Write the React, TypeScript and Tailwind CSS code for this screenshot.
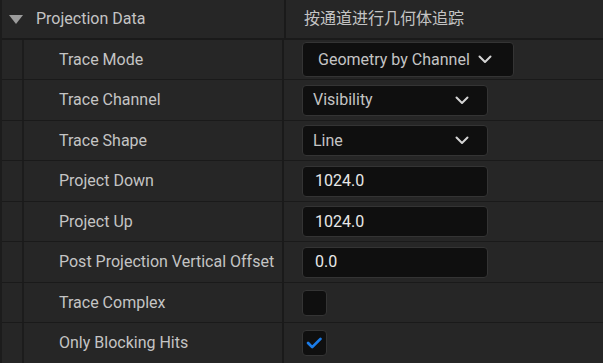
import React from 'react'

const font = { fontFamily: 'Roboto, "Noto Sans CJK SC", sans-serif' }

function Chevron() {
  return (
    <svg width="14" height="9" viewBox="0 0 14 9" className="shrink-0">
      <path d="M1.5 1.5 L7 7 L12.5 1.5" fill="none" stroke="#d4d4d4" strokeWidth="2" strokeLinecap="round" strokeLinejoin="round" />
    </svg>
  )
}

function Combo({ value, wide }: { value: string; wide?: boolean }) {
  return wide ? (
    <div className="flex h-[35px] w-[212px] items-center justify-between rounded-[4px] border border-[#343434] bg-[#0f0f0f] pl-[15px] pr-[21px] text-[#c4c4c4]">
      <span>{value}</span>
      <Chevron />
    </div>
  ) : (
    <div className="flex h-[31px] w-[186px] items-center justify-between rounded-[4px] border border-[#343434] bg-[#0f0f0f] pl-[10px] pr-[18px] text-[#c4c4c4]">
      <span>{value}</span>
      <Chevron />
    </div>
  )
}

function NumberBox({ value }: { value: string }) {
  return (
    <div className="flex h-[31px] w-[186px] items-center rounded-[4px] border border-[#343434] bg-[#0f0f0f] pl-[12px] text-[#e8e8e8]">
      {value}
    </div>
  )
}

function CheckBox({ checked }: { checked?: boolean }) {
  return (
    <div className="flex h-[26px] w-[25px] items-center justify-center rounded-[4px] border border-[#343434] bg-[#0f0f0f]">
      {checked && (
        <svg width="25" height="26" viewBox="0 0 25 26">
          <path d="M5.5 13 L10 17.5 L19 8.5" fill="none" stroke="#1b7ce8" strokeWidth="3" strokeLinecap="round" strokeLinejoin="round" />
        </svg>
      )}
    </div>
  )
}

const rows: { label: string; h: string; value: React.ReactNode }[] = [
  { label: 'Trace Mode', h: 'h-[40px]', value: <Combo value="Geometry by Channel" wide /> },
  { label: 'Trace Channel', h: 'h-[41px]', value: <Combo value="Visibility" /> },
  { label: 'Trace Shape', h: 'h-[40px]', value: <Combo value="Line" /> },
  { label: 'Project Down', h: 'h-[41px]', value: <NumberBox value="1024.0" /> },
  { label: 'Project Up', h: 'h-[40px]', value: <NumberBox value="1024.0" /> },
  { label: 'Post Projection Vertical Offset', h: 'h-[41px]', value: <NumberBox value="0.0" /> },
  { label: 'Trace Complex', h: 'h-[40px]', value: <CheckBox /> },
  { label: 'Only Blocking Hits', h: 'h-[41px]', value: <CheckBox checked /> },
]

export default function App() {
  return (
    <div className="h-[363px] w-[603px] overflow-hidden border-l-2 border-[#1c1c1c] bg-[#262626] text-[16px]" style={font}>
      {/* Заголовок категории */}
      <div className="flex h-[40px] border-b-2 border-[#1a1a1a]">
        <div className="flex w-[282px] items-center">
          <svg width="14" height="9" viewBox="0 0 14 9" className="ml-[7px] mr-[13px]">
            <path d="M0 0 L14 0 L7 9 Z" fill="#9c9c9c" />
          </svg>
          <span className="text-[#c4c4c4]">Projection Data</span>
        </div>
        <div className="flex flex-1 items-center border-l-2 border-[#1a1a1a] pl-[18px] text-[#c4c4c4]">
          按通道进行几何体追踪
        </div>
      </div>

      {/* Свойства */}
      {rows.map((row) => (
        <div key={row.label} className={`flex ${row.h} border-b border-[#1a1a1a]`}>
          <div className="w-[22px] border-r-2 border-[#1c1c1c]" />
          <div className="flex w-[258px] items-center pl-[35px] text-[#c4c4c4]">{row.label}</div>
          <div className="flex flex-1 items-center border-l-2 border-[#1a1a1a] pl-[18px]">{row.value}</div>
        </div>
      ))}
    </div>
  )
}
